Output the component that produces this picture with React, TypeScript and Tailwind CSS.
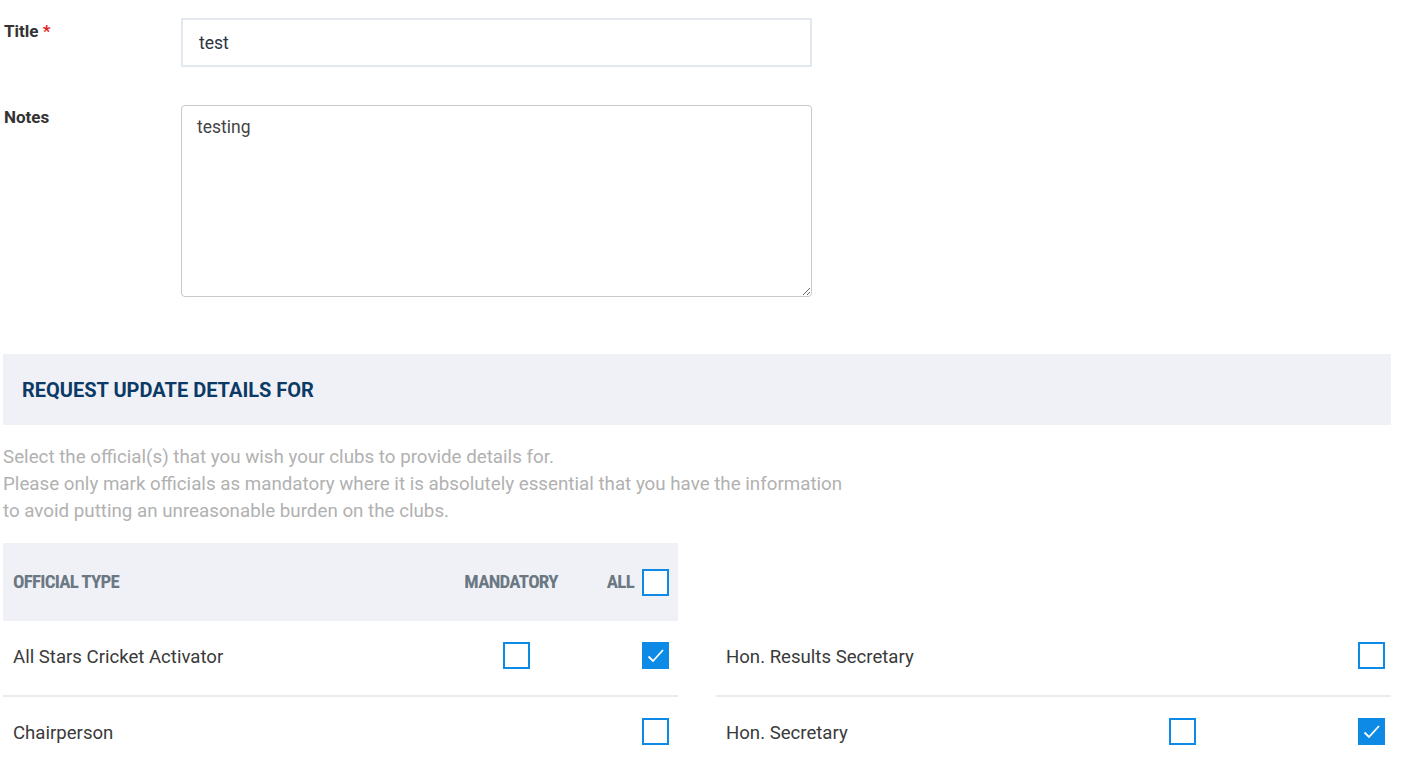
import React from "react";

type Official = {
  name: string;
  mandatory: boolean | null;
  all: boolean;
};

const leftRows: Official[] = [
  { name: "All Stars Cricket Activator", mandatory: false, all: true },
  { name: "Chairperson", mandatory: null, all: false },
];

const rightRows: Official[] = [
  { name: "Hon. Results Secretary", mandatory: null, all: false },
  { name: "Hon. Secretary", mandatory: false, all: true },
];

function Checkbox({ checked }: { checked: boolean }) {
  return (
    <span
      className={
        checked
          ? "flex h-[27px] w-[27px] items-center justify-center border-2 border-[#0d8ae6] bg-[#0d8ae6]"
          : "flex h-[27px] w-[27px] items-center justify-center border-2 border-[#0d8ae6] bg-white"
      }
    >
      {checked && (
        <svg width="23" height="23" viewBox="0 0 23 23" fill="none">
          <path d="M4.5 12.5L9 17L19 6" stroke="white" strokeWidth="1.8" />
        </svg>
      )}
    </span>
  );
}

function OfficialTable({
  rows,
  showHeader,
  cols,
  allPad,
}: {
  rows: Official[];
  showHeader: boolean;
  cols: string;
  allPad: string;
}) {
  return (
    <div className="w-[675px]">
      {showHeader ? (
        <div
          className={`grid h-[78px] items-center bg-[#f0f1f6] text-[19px] font-bold tracking-[-0.04em] text-[#6b7884] font-['Roboto_Condensed',Roboto,sans-serif] ${cols}`}
        >
          <span className="pl-[10px]">OFFICIAL TYPE</span>
          <span className="pr-[10px] text-center">MANDATORY</span>
          <span className={`flex items-center justify-end gap-[8px] ${allPad}`}>
            ALL
            <Checkbox checked={false} />
          </span>
        </div>
      ) : (
        <div className="h-[78px]" />
      )}
      {rows.map((row) => (
        <div
          key={row.name}
          className={`grid h-[76px] items-center border-b-2 border-[#ebebeb] ${cols}`}
        >
          <span className="pl-[10px] text-[18.6px] text-[#3a3a3a]">{row.name}</span>
          <span className="mb-[5px] flex justify-center">
            {row.mandatory !== null && <Checkbox checked={row.mandatory} />}
          </span>
          <span className={`mb-[5px] flex justify-end ${allPad}`}>
            <Checkbox checked={row.all} />
          </span>
        </div>
      ))}
    </div>
  );
}

export default function App() {
  return (
    <div className="h-[760px] w-[1405px] overflow-hidden bg-white font-['Roboto',sans-serif] text-[#333]">
      <div className="pl-[3px] pt-[18px]">
        <div className="flex">
          <label className="w-[178px] pl-[1px] pt-[1px] text-[17px] font-bold text-[#333]">
            Title <span className="text-[#e21b1b]">*</span>
          </label>
          <input
            readOnly
            value="test"
            className="h-[49px] w-[631px] border-2 border-[#e3e7f0] bg-white px-[16px] text-[17.5px] text-[#2b3440] outline-none"
          />
        </div>

        <div className="mt-[38px] flex">
          <label className="w-[178px] pl-[1px] text-[17px] font-bold text-[#333]">
            Notes
          </label>
          <textarea
            readOnly
            defaultValue="testing"
            className="h-[192px] w-[631px] rounded-[4px] border border-[#c9c9c9] px-[15px] py-[8px] text-[17.5px] text-[#444] outline-none"
          />
        </div>

        <div className="mt-[57px] flex h-[71px] w-[1388px] items-center bg-[#f0f1f6] px-[19px]">
          <h2 className="text-[20px] font-bold text-[#0b3a66]">REQUEST UPDATE DETAILS FOR</h2>
        </div>

        <p className="mt-[19px] text-[18.75px] leading-[27px] text-[#b1b1b1]">
          Select the official(s) that you wish your clubs to provide details for.
          <br />
          Please only mark officials as mandatory where it is absolutely essential that you have the information
          <br />
          to avoid putting an unreasonable burden on the clubs.
        </p>

        <div className="mt-[18px] flex gap-[38px]">
          <OfficialTable
            rows={leftRows}
            showHeader
            cols="grid-cols-[1fr_128px_98px]"
            allPad="pr-[9px]"
          />
          <OfficialTable
            rows={rightRows}
            showHeader={false}
            cols="grid-cols-[1fr_128px_145px]"
            allPad="pr-[6px]"
          />
        </div>
      </div>
    </div>
  );
}
